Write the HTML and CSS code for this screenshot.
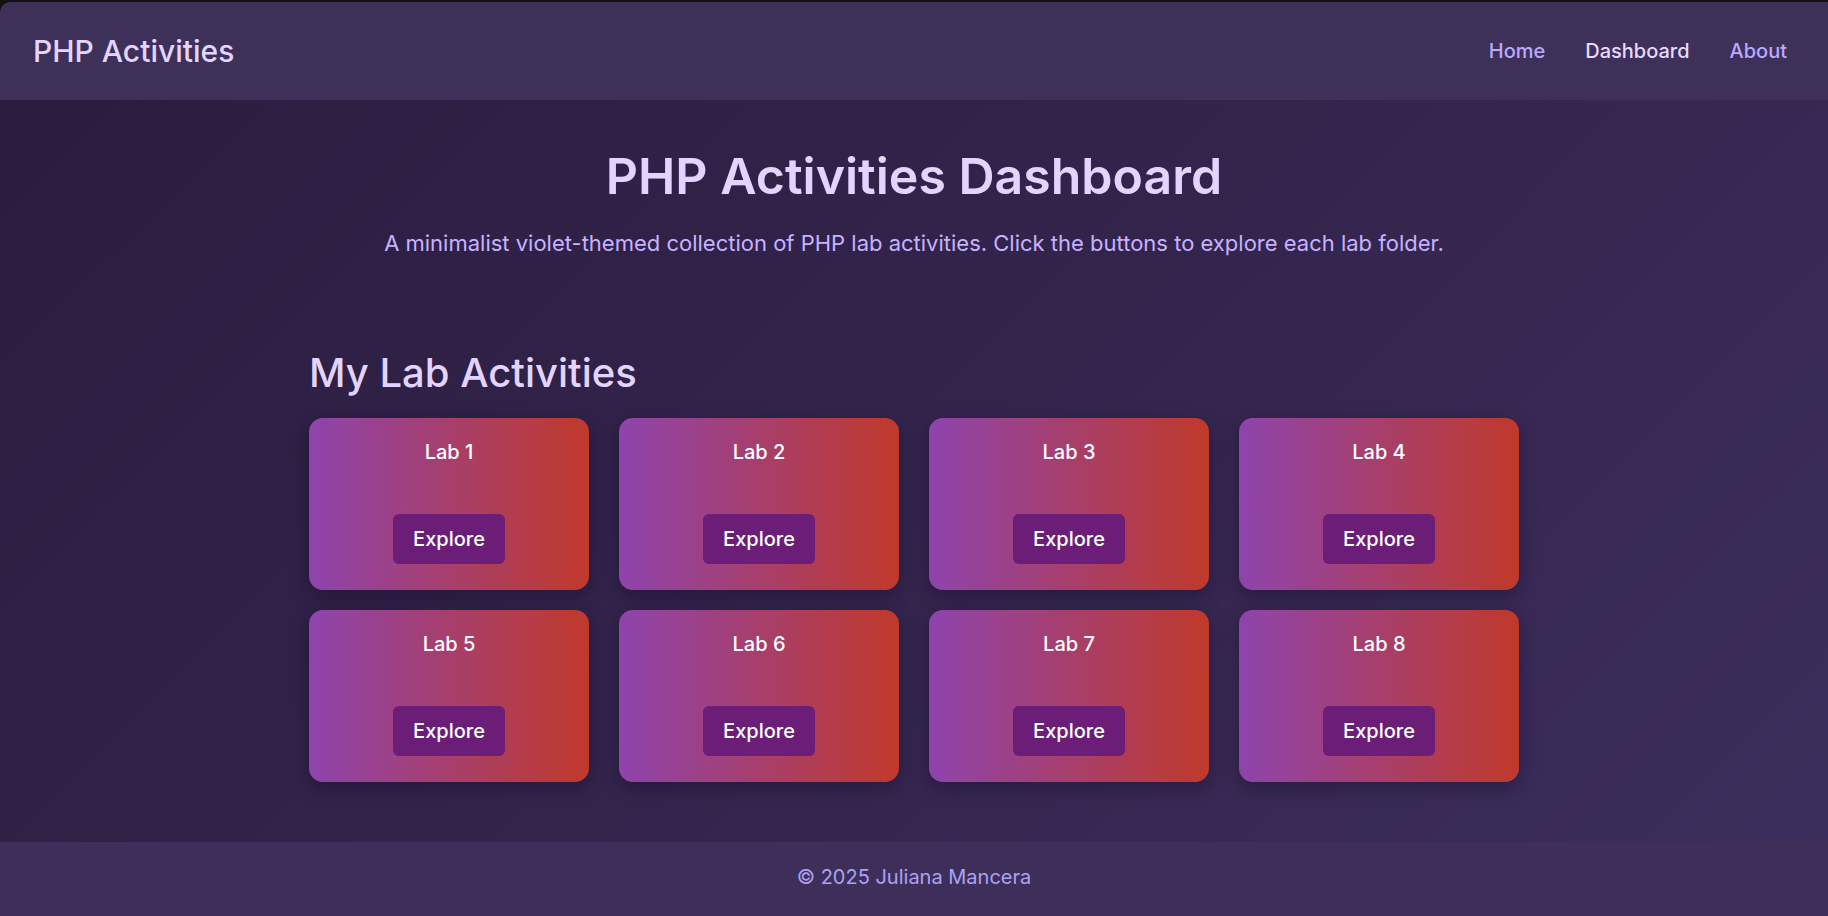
FILE: index.html
```html
<!DOCTYPE html>
<html lang="en">
<head>
<meta charset="UTF-8">
<title>PHP Activities Dashboard</title>
<link rel="stylesheet" href="styles.css">
</head>
<body>
<div class="page">
  <header class="topbar">
    <div class="brand">PHP Activities</div>
    <nav class="nav">
      <a href="#" class="nav-link">Home</a>
      <a href="#" class="nav-link active">Dashboard</a>
      <a href="#" class="nav-link">About</a>
    </nav>
  </header>
  <main class="main">
    <section class="hero">
      <h1 class="hero-title">PHP Activities Dashboard</h1>
      <p class="hero-sub">A minimalist violet-themed collection of PHP lab activities. Click the buttons to explore each lab folder.</p>
    </section>
    <section class="labs">
      <h2 class="labs-title">My Lab Activities</h2>
      <div class="lab-grid">
        <div class="lab-card"><h3 class="lab-name">Lab 1</h3><a href="#" class="lab-btn">Explore</a></div>
        <div class="lab-card"><h3 class="lab-name">Lab 2</h3><a href="#" class="lab-btn">Explore</a></div>
        <div class="lab-card"><h3 class="lab-name">Lab 3</h3><a href="#" class="lab-btn">Explore</a></div>
        <div class="lab-card"><h3 class="lab-name">Lab 4</h3><a href="#" class="lab-btn">Explore</a></div>
        <div class="lab-card"><h3 class="lab-name">Lab 5</h3><a href="#" class="lab-btn">Explore</a></div>
        <div class="lab-card"><h3 class="lab-name">Lab 6</h3><a href="#" class="lab-btn">Explore</a></div>
        <div class="lab-card"><h3 class="lab-name">Lab 7</h3><a href="#" class="lab-btn">Explore</a></div>
        <div class="lab-card"><h3 class="lab-name">Lab 8</h3><a href="#" class="lab-btn">Explore</a></div>
      </div>
    </section>
  </main>
  <footer class="footer">© 2025 Juliana Mancera</footer>
</div>
</body>
</html>
```

FILE: styles.css
```css
* { box-sizing: border-box; }

html, body {
  margin: 0;
  padding: 0;
}

body {
  background: #121212;
  padding-top: 2px;
  font-family: Inter, "Noto Sans", "Liberation Sans", sans-serif;
}

.page {
  min-height: 914px;
  display: flex;
  flex-direction: column;
  border-top-left-radius: 10px;
  overflow: hidden;
}

.topbar {
  height: 98px;
  background: #3d3059;
  display: flex;
  align-items: center;
  justify-content: space-between;
  padding: 0 41px 0 32px;
}

.brand {
  font-size: 30px;
  font-weight: 500;
  color: #e3d5ff;
  padding-left: 1px;
}

.nav {
  display: flex;
  gap: 40px;
}

.nav-link {
  font-size: 20px;
  font-weight: 500;
  color: #bba9ff;
  text-decoration: none;
}

.nav-link.active {
  color: #e6daff;
}

.main {
  flex: 1;
  background: linear-gradient(135deg, #2b1c3f 0%, #33244c 50%, #3c2e5c 100%);
  padding: 46px 20px 60px;
}

.hero {
  text-align: center;
}

.hero-title {
  margin: 0 0 23px;
  font-size: 50px;
  line-height: 61px;
  font-weight: 600;
  color: #e2d4ff;
}

.hero-sub {
  margin: 0;
  font-size: 22px;
  line-height: 27px;
  color: #c6b3ff;
}

.labs {
  max-width: 1210px;
  margin: 92px auto 0;
}

.labs-title {
  margin: 0 0 21px;
  font-size: 40px;
  line-height: 48px;
  font-weight: 500;
  color: #e2d4ff;
}

.lab-grid {
  display: grid;
  grid-template-columns: repeat(4, 1fr);
  gap: 20px 30px;
}

.lab-card {
  height: 172px;
  border-radius: 14px;
  background: linear-gradient(90deg, #8e44ad 0%, #c0392b 100%);
  box-shadow: 0 6px 18px rgba(15, 5, 30, 0.35);
  padding: 22px 20px 0;
  display: flex;
  flex-direction: column;
  align-items: center;
}

.lab-name {
  margin: 0;
  font-size: 20px;
  line-height: 24px;
  font-weight: 500;
  color: #ffffff;
}

.lab-btn {
  margin-top: 50px;
  height: 50px;
  padding: 0 20px;
  display: flex;
  align-items: center;
  justify-content: center;
  background: #6b1d78;
  border-radius: 6px;
  color: #ffffff;
  font-size: 20px;
  font-weight: 500;
  text-decoration: none;
}

.footer {
  height: 74px;
  background: #3d2f5a;
  color: #aca1f4;
  font-size: 20px;
  line-height: 24px;
  text-align: center;
  padding-top: 23px;
}
```
